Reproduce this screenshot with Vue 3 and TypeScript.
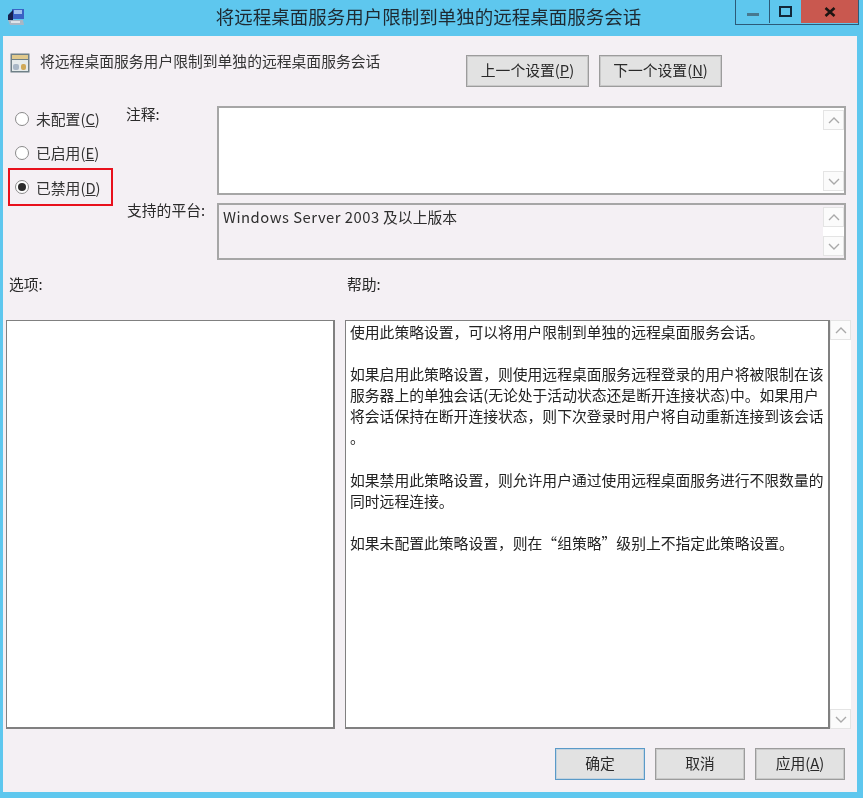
<script setup lang="ts">
const radios = [
  { label: '未配置(', key: 'C', on: false, mark: false },
  { label: '已启用(', key: 'E', on: false, mark: false },
  { label: '已禁用(', key: 'D', on: true, mark: true },
]
const helpLines: string[] = [
  '使用此策略设置，可以将用户限制到单独的远程桌面服务会话。',
  '',
  '如果启用此策略设置，则使用远程桌面服务远程登录的用户将被限制在该',
  '服务器上的单独会话(无论处于活动状态还是断开连接状态)中。如果用户',
  '将会话保持在断开连接状态，则下次登录时用户将自动重新连接到该会话',
  '。',
  '',
  '如果禁用此策略设置，则允许用户通过使用远程桌面服务进行不限数量的',
  '同时远程连接。',
  '',
  '如果未配置此策略设置，则在“组策略”级别上不指定此策略设置。',
]
</script>

<template>
  <div class="window">
    <header class="titlebar">
      <svg class="app-icon" width="18" height="20" viewBox="0 0 18 20">
        <rect x="5" y="2" width="12" height="10" fill="#3a62c4" />
        <rect x="7" y="3" width="8" height="4" fill="#9fc0ee" />
        <path d="M1 8 L6 3 L6 13 L1 13 Z" fill="#17204e" />
        <path d="M1 13 H16 L17 18 H3 Z" fill="#a9b6c4" />
        <rect x="4" y="14" width="9" height="2" fill="#dde4ea" />
      </svg>
      <h1 class="title">将远程桌面服务用户限制到单独的远程桌面服务会话</h1>
      <div class="controls">
        <div class="ctl ctl-min"><span class="min-bar"></span></div>
        <div class="ctl ctl-max"><span class="max-box"></span></div>
        <div class="ctl ctl-close">
          <svg width="12" height="10" viewBox="0 0 12 10">
            <path d="M1.5 1 L10.5 9 M10.5 1 L1.5 9" stroke="#1d1512" stroke-width="2.6" />
          </svg>
        </div>
      </div>
    </header>

    <main class="panel">
      <section class="head">
        <div class="policy">
          <svg width="20" height="20" viewBox="0 0 20 20">
            <rect x="0.5" y="0.5" width="19" height="19" fill="#6f8087" />
            <rect x="2" y="2" width="16" height="4" fill="#e0c98c" />
            <rect x="2" y="7" width="16" height="11" fill="#e6ecec" />
            <rect x="3" y="11" width="6" height="6" rx="2" fill="#a9b8c6" />
            <rect x="11" y="11" width="5" height="6" rx="2" fill="#d0aa58" />
          </svg>
          <span class="policy-text">将远程桌面服务用户限制到单独的远程桌面服务会话</span>
        </div>
        <div class="nav">
          <button class="btn nav-btn" type="button">上一个设置(<u>P</u>)</button>
          <button class="btn nav-btn" type="button">下一个设置(<u>N</u>)</button>
        </div>
      </section>

      <section class="settings">
        <div class="radios">
          <div v-for="r in radios" :key="r.key" class="radio" :class="{ marked: r.mark }">
            <span class="dot" :class="{ on: r.on }"></span>
            <span class="radio-text">{{ r.label }}<u>{{ r.key }}</u>)</span>
          </div>
        </div>
        <div class="lbl lbl-note">注释:</div>
        <div class="box note-box">
          <div class="scroll">
            <div class="arrow">
              <svg width="12" height="7" viewBox="0 0 12 7"><path d="M1 6 L6 1 L11 6" fill="none" stroke="#a9a9a9" stroke-width="1.4" /></svg>
            </div>
            <div class="arrow">
              <svg width="12" height="7" viewBox="0 0 12 7"><path d="M1 1 L6 6 L11 1" fill="none" stroke="#a9a9a9" stroke-width="1.4" /></svg>
            </div>
          </div>
        </div>
        <div class="lbl lbl-platform">支持的平台:</div>
        <div class="box platform-box">
          <span class="platform-text"><span class="latin">Windows Server 2003</span> 及以上版本</span>
          <div class="scroll">
            <div class="arrow">
              <svg width="12" height="7" viewBox="0 0 12 7"><path d="M1 6 L6 1 L11 6" fill="none" stroke="#a9a9a9" stroke-width="1.4" /></svg>
            </div>
            <div class="arrow">
              <svg width="12" height="7" viewBox="0 0 12 7"><path d="M1 1 L6 6 L11 1" fill="none" stroke="#a9a9a9" stroke-width="1.4" /></svg>
            </div>
          </div>
        </div>
      </section>

      <section class="captions">
        <span class="cap-options">选项:</span>
        <span>帮助:</span>
      </section>

      <section class="lists">
        <div class="options"></div>
        <div class="help">
          <p v-for="(line, i) in helpLines" :key="i" class="help-line">{{ line }}</p>
        </div>
        <div class="scroll help-scroll">
          <div class="arrow">
            <svg width="12" height="7" viewBox="0 0 12 7"><path d="M1 6 L6 1 L11 6" fill="none" stroke="#a9a9a9" stroke-width="1.4" /></svg>
          </div>
          <div class="arrow">
            <svg width="12" height="7" viewBox="0 0 12 7"><path d="M1 1 L6 6 L11 1" fill="none" stroke="#a9a9a9" stroke-width="1.4" /></svg>
          </div>
        </div>
      </section>

      <footer class="footer">
        <button class="btn foot-btn primary" type="button">确定</button>
        <button class="btn foot-btn" type="button">取消</button>
        <button class="btn foot-btn" type="button">应用(<u>A</u>)</button>
      </footer>
    </main>
  </div>
</template>

<style scoped>
.window {
  width: 863px;
  height: 798px;
  display: flex;
  flex-direction: column;
  background: #5ec7ee;
  color: #222;
  font-family: "Noto Sans CJK SC", "Liberation Sans", sans-serif;
  font-size: 14.8px;
  overflow: hidden;
  filter: blur(0.45px);
}
.titlebar {
  height: 36px;
  flex: none;
  display: grid;
  grid-template-columns: 1fr auto 1fr;
  align-items: center;
}
.app-icon {
  margin: -2px 0 0 7px;
}
.title {
  margin: 0;
  padding: 0 6px 4px 0;
  font-size: 18.5px;
  font-weight: 400;
  color: #1e2a32;
  white-space: nowrap;
  line-height: 32px;
}
.controls {
  justify-self: end;
  align-self: start;
  margin-right: 4px;
  display: flex;
  height: 24px;
  border: solid #2c5a78;
  border-width: 0 1px 1px 1px;
}
.ctl {
  height: 23px;
  display: flex;
  align-items: center;
  justify-content: center;
}
.ctl-min {
  width: 33px;
  border-right: 1px solid #2c5a78;
}
.ctl-max {
  width: 31px;
}
.ctl-close {
  width: 57px;
  background: #c9584f;
}
.min-bar {
  width: 12px;
  height: 3px;
  margin-top: 5px;
  background: #47788f;
}
.max-box {
  width: 13px;
  height: 11px;
  box-sizing: border-box;
  border: 2.5px solid #12283a;
  margin-top: 0;
}
.panel {
  flex: none;
  height: 756px;
  margin: 0 6px 0 3px;
  background: #f4f0f4;
  display: flex;
  flex-direction: column;
}
.head {
  height: 66px;
  flex: none;
  display: flex;
  justify-content: space-between;
}
.policy {
  display: flex;
  align-items: center;
  gap: 10px;
  margin: 16px 0 0 7px;
  height: 22px;
  color: #333;
}
.policy-text {
  padding-bottom: 5px;
}
.nav {
  display: flex;
  gap: 10px;
  margin: 19px 135px 0 0;
}
.btn {
  box-sizing: border-box;
  background: #e2e2e2;
  border: 1px solid #9c9c9c;
  box-shadow: inset 0 0 0 1px #c9c9c9;
  font: inherit;
  color: #2a2a2a;
  padding: 0 0 4px;
}
.nav-btn {
  width: 123px;
  height: 32px;
}
.settings {
  height: 158px;
  flex: none;
  display: grid;
  grid-template-columns: 123px 91px 629px;
  grid-template-rows: 93px 65px;
}
.radios {
  grid-row: 1 / 3;
  grid-column: 1;
  display: flex;
  flex-direction: column;
  padding-left: 12px;
}
.radio {
  height: 34px;
  display: flex;
  align-items: center;
  gap: 7px;
  color: #333;
}
.radio-text {
  padding-bottom: 2px;
}
.marked {
  box-sizing: border-box;
  width: 105px;
  height: 38px;
  margin: -2px 0 0 -7px;
  padding-left: 5px;
  border: 2px solid #e8101c;
}
.marked .radio-text {
  padding-bottom: 0;
}
.dot {
  position: relative;
  box-sizing: border-box;
  width: 14px;
  height: 14px;
  border-radius: 50%;
  background: #fff;
  border: 1.5px solid #8a8a8a;
  flex: none;
}
.dot.on::after {
  content: "";
  position: absolute;
  inset: 2px;
  border-radius: 50%;
  background: #2b2b2b;
}
.lbl {
  grid-column: 2;
  color: #2a2a2a;
}
.lbl-note {
  padding-top: 1px;
  line-height: 22px;
}
.lbl-platform {
  margin-left: 1px;
  line-height: 22px;
  margin-top: 4px;
}
.box {
  grid-column: 3;
  box-sizing: border-box;
  border: 2px solid #a6a6a6;
  display: flex;
  justify-content: flex-end;
  position: relative;
}
.note-box {
  height: 89px;
  margin-top: 4px;
  background: #fff;
}
.platform-box {
  height: 57px;
  margin-top: 8px;
  justify-content: space-between;
}
.platform-text {
  padding: 0 0 0 4px;
  line-height: 23px;
  color: #2e2e2e;
  white-space: nowrap;
}
.latin {
  letter-spacing: 0.5px;
}
.scroll {
  width: 21px;
  display: flex;
  flex-direction: column;
  justify-content: space-between;
  flex: none;
  background: #fff;
  margin: 2px 0;
}
.arrow {
  height: 20px;
  box-sizing: border-box;
  border: 1px solid #e4e4e4;
  display: flex;
  align-items: center;
  justify-content: center;
  background: #fbfbfb;
}
.captions {
  height: 60px;
  flex: none;
  display: flex;
  padding: 13px 0 0 6px;
  box-sizing: border-box;
  color: #2a2a2a;
  line-height: 22px;
}
.cap-options {
  width: 338px;
}
.lists {
  flex: none;
  height: 409px;
  display: flex;
  padding-left: 3px;
}
.options {
  width: 329px;
  box-sizing: border-box;
  background: #fff;
  border: 1px solid #808080;
  border-width: 1px 2px 2px 1px;
}
.help {
  width: 485px;
  margin-left: 10px;
  box-sizing: border-box;
  background: #fff;
  border: 1px solid #808080;
  border-width: 1px 2px 2px 1px;
  padding: 0 0 0 4px;
}
.help-line {
  margin: 0;
  height: 21.1px;
  line-height: 21.1px;
  white-space: nowrap;
  color: #222;
}
.help-scroll {
  margin: 0;
}
.footer {
  flex: 1;
  display: flex;
  justify-content: flex-end;
  gap: 10px;
  padding: 19px 12px 0 0;
}
.foot-btn {
  width: 90px;
  height: 32px;
}
.primary {
  border-color: #5a9ac8;
  box-shadow: inset 0 0 0 1px #c3d3df;
}
</style>

<style>
html, body {
  margin: 0;
  padding: 0;
  background: #5ec7ee;
}
</style>
